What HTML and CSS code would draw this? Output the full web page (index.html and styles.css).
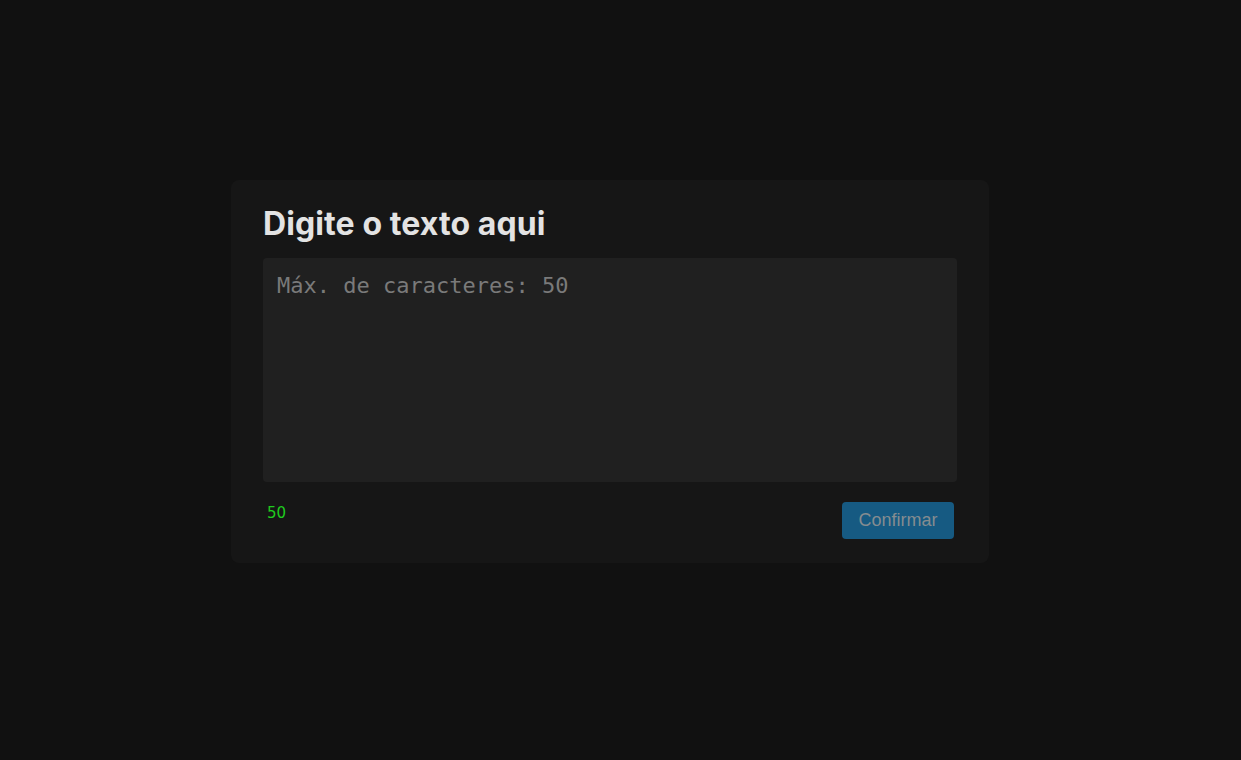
FILE: index.html
```html
<!DOCTYPE html>
<html lang="pt">
<head>
<meta charset="utf-8">
<title>Digite o texto aqui</title>
<link rel="stylesheet" href="styles.css">
</head>
<body>
<main class="card">
  <h1 class="title">Digite o texto aqui</h1>
  <textarea class="input" placeholder="Máx. de caracteres: 50" maxlength="50"></textarea>
  <div class="footer">
    <span class="counter">50</span>
    <button class="confirm" type="button">Confirmar</button>
  </div>
</main>
</body>
</html>
```
FILE: styles.css
```css
html, body {
  margin: 0;
  padding: 0;
  background: #111111;
}
body {
  min-height: 760px;
  padding-top: 180px;
  padding-left: 231px;
  box-sizing: border-box;
}
.card {
  width: 758px;
  box-sizing: border-box;
  background: #161616;
  border-radius: 8px;
  padding: 24px 32px 24px 32px;
  display: flex;
  flex-direction: column;
}
.title {
  margin: 0;
  font-family: Inter, "Noto Sans", sans-serif;
  font-weight: 700;
  font-size: 32px;
  line-height: 40px;
  color: #e3e3e3;
  letter-spacing: 0.1px;
}
.input {
  margin-top: 14px;
  height: 224px;
  box-sizing: border-box;
  background: #202020;
  border: none;
  border-radius: 4px;
  padding: 15px 14px;
  resize: none;
  outline: none;
  font-family: "DejaVu Sans Mono", "Liberation Mono", monospace;
  font-size: 22px;
  line-height: 26px;
  color: #d0d0d0;
}
.input::placeholder {
  color: #7a7a7a;
}
.footer {
  margin-top: 20px;
  display: flex;
  justify-content: space-between;
  align-items: flex-start;
}
.counter {
  margin-left: 4px;
  margin-top: 1px;
  font-family: "DejaVu Sans", Verdana, sans-serif;
  font-size: 15px;
  line-height: 20px;
  color: #1fcc1f;
}
.confirm {
  margin-right: 3px;
  width: 112px;
  height: 37px;
  border: none;
  border-radius: 4px;
  background: #165a82;
  color: #858c90;
  font-family: "Liberation Sans", Arial, sans-serif;
  font-size: 18px;
  padding: 0;
  cursor: pointer;
}
```
